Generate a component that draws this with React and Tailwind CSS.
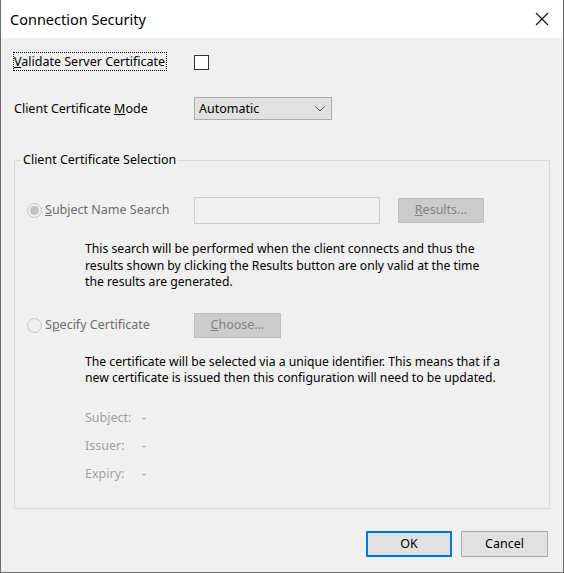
import React from 'react';

const font = { fontFamily: '"Noto Sans", "Open Sans", sans-serif' };

function Radio({ checked }) {
  return (
    <span className="relative inline-flex h-[15px] w-[15px] items-center justify-center rounded-full border border-[#c4c4c4] bg-[#f0f0f0]">
      {checked && <span className="h-[9px] w-[9px] rounded-full bg-[#c4c4c4]" />}
    </span>
  );
}

function Btn({ children, className = '' }) {
  return (
    <div className={`flex items-center justify-center border ${className}`}>{children}</div>
  );
}

export default function App() {
  return (
    <div className="flex h-[573px] w-[564px] flex-col border-x border-b border-[#6d6d6d] bg-[#f0f0f0] text-[12.5px] text-black" style={font}>
      {/* title bar */}
      <div className="flex h-[38px] shrink-0 items-center justify-between bg-white pl-[9px] pr-[14px]">
        <span className="text-[14.5px] leading-none">Connection Security</span>
        <svg width="14" height="14" viewBox="0 0 14 14">
          <path d="M1 1 L13 13 M13 1 L1 13" stroke="#111" strokeWidth="1.1" />
        </svg>
      </div>

      <div className="flex flex-1 flex-col px-[12px]">
        <div className="mt-[15px] flex h-[18px] items-center">
          <span className="w-[181px]">
            <span className="border border-dotted border-black pr-[1px]">
              <u>V</u>alidate Server Certificate
            </span>
          </span>
          <span className="h-[15px] w-[15px] border border-[#333] bg-white" />
        </div>

        <div className="mt-[26px] flex h-[23px] items-center">
          <span className="w-[181px] pl-[1px] pt-[1px]">
            Client Certificate <u>M</u>ode
          </span>
          <div className="flex h-[23px] w-[138px] items-center justify-between border border-[#adadad] bg-[#e1e1e1] pl-[4px] pr-[6px] pt-[1px]">
            <span>Automatic</span>
            <svg width="10" height="6" viewBox="0 0 10 6">
              <path d="M0.5 0.5 L5 5 L9.5 0.5" fill="none" stroke="#555" strokeWidth="1" />
            </svg>
          </div>
        </div>

        {/* group box */}
        <div className="relative ml-[1px] mt-[40px] h-[349px] w-[536px] border border-[#dcdcdc]">
          <span className="absolute -top-[9px] left-[6px] bg-[#f0f0f0] px-[2px] leading-[16px]">Client Certificate Selection</span>

          <div className="ml-[12px] mt-[36px] flex h-[27px] items-center">
            <div className="flex w-[167px] items-center gap-[3px] text-[#6d6d6d]">
              <Radio checked />
              <span><u>S</u>ubject Name Search</span>
            </div>
            <div className="h-[27px] w-[186px] border border-[#cccccc] bg-[#f0f0f0]" />
            <Btn className="ml-[18px] h-[25px] w-[86px] border-[#bfbfbf] bg-[#cccccc] text-[#838383]">
              <span><u>R</u>esults...</span>
            </Btn>
          </div>

          <p className="ml-[70px] mt-[17px] whitespace-nowrap text-[12.2px] leading-[16.5px]">
            This search will be performed when the client connects and thus the<br />
            results shown by clicking the Results button are only valid at the time<br />
            the results are generated.
          </p>

          <div className="ml-[12px] mt-[22px] flex h-[25px] items-center">
            <div className="flex w-[167px] items-center gap-[3px] text-[#6d6d6d]">
              <Radio />
              <span>S<u>p</u>ecify Certificate</span>
            </div>
            <Btn className="h-[25px] w-[87px] border-[#bfbfbf] bg-[#cccccc] text-[#838383]">
              <span><u>C</u>hoose...</span>
            </Btn>
          </div>

          <p className="ml-[70px] mt-[16px] whitespace-nowrap text-[12.2px] leading-[16.5px]">
            The certificate will be selected via a unique identifier. This means that if a<br />
            new certificate is issued then this configuration will need to be updated.
          </p>

          <div className="ml-[70px] mt-[24px] flex flex-col gap-[12px] text-[#a0a0a0]">
            {[['Subject:', '-'], ['Issuer:', '-'], ['Expiry:', '-']].map(([k, v]) => (
              <div key={k} className="flex h-[16px] items-center">
                <span className="w-[57px]">{k}</span>
                <span>{v}</span>
              </div>
            ))}
          </div>
        </div>

        <div className="mt-[22px] flex justify-end gap-[9px] pr-[3px]">
          <Btn className="h-[26px] w-[86px] border-2 border-[#0078d7] bg-[#e1e1e1] pt-[1px]">OK</Btn>
          <Btn className="h-[26px] w-[87px] border-[#adadad] bg-[#e1e1e1] pt-[1px]">Cancel</Btn>
        </div>
      </div>
    </div>
  );
}
